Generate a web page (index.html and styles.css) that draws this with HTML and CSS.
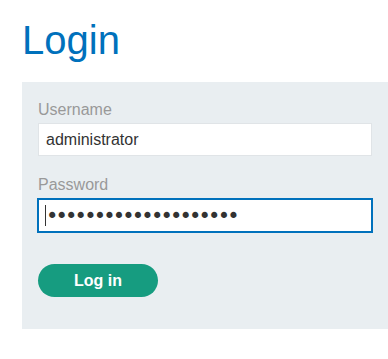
FILE: index.html
```html
<!DOCTYPE html>
<html>
<head>
<meta charset="utf-8">
<link rel="stylesheet" href="styles.css">
</head>
<body>
<h1 class="title">Login</h1>
<section class="panel">
  <form class="login-form">
    <label class="field-label" for="username">Username</label>
    <input class="field-input" id="username" type="text" value="administrator">
    <label class="field-label field-label--second" for="password">Password</label>
    <input class="field-input field-input--focused" id="password" type="password" value="12345678901234567890">
    <button class="btn-login" type="button">Log in</button>
  </form>
</section>
</body>
</html>
```

FILE: styles.css
```css
* { box-sizing: border-box; }
html, body { margin: 0; padding: 0; background: #fff; }
body {
  font-family: "Liberation Sans", Arial, sans-serif;
  color: #333;
  overflow: hidden;
}
.title {
  margin: 17px 0 19px 22px;
  font-size: 40px;
  line-height: 46px;
  font-weight: normal;
  color: #0071bc;
}
.panel {
  margin-left: 22px;
  background: #e9eef1;
  padding: 19px 16px 32px 16px;
  width: 380px;
}
.login-form {
  display: flex;
  flex-direction: column;
  align-items: flex-start;
  width: 334px;
}
.field-label {
  font-size: 16px;
  line-height: 18px;
  color: #999;
  margin-bottom: 4px;
}
.field-label--second { margin-top: 20px; }
.field-input {
  width: 334px;
  height: 33px;
  border: 1px solid #e0e4e7;
  background: #fff;
  font-family: "Liberation Sans", Arial, sans-serif;
  font-size: 16px;
  color: #333;
  padding: 0 7px;
  margin: 0;
  outline: none;
}
.field-input--focused {
  border: 1px solid #0071bc;
  outline: 1px solid #0071bc;
  height: 33px;
  margin-top: 1px;
  font-family: "DejaVu Sans", sans-serif;
  font-size: 21px;
  letter-spacing: -2.85px;
  padding-left: 7px;
  background: linear-gradient(#333, #333) no-repeat 6px 50% / 1px 21px, #fff;
}
.btn-login {
  margin-top: 32px;
  width: 120px;
  height: 33px;
  border: none;
  border-radius: 17px;
  background: #169c80;
  color: #fff;
  font-family: "Liberation Sans", Arial, sans-serif;
  font-weight: bold;
  font-size: 16px;
  padding: 0;
}
```
